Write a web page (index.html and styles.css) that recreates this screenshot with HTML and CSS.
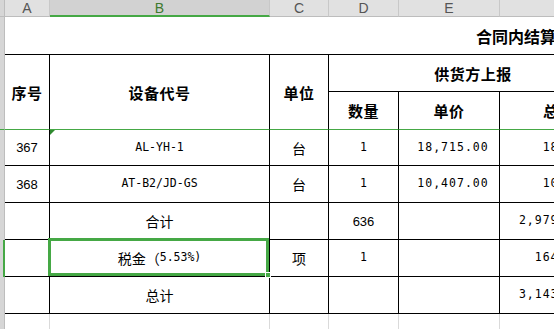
FILE: index.html
```html
<!DOCTYPE html>
<html lang="zh-CN">
<head>
    <meta charset="UTF-8">
    <meta name="viewport" content="width=device-width, initial-scale=1.0">
    <title>合同内结算</title>
    <link rel="stylesheet" href="styles.css">
</head>
<body>

<div class="sheet">
    <!-- column letters -->
    <div class="cell gutter colhead"></div>
    <div class="cell colhead">A</div>
    <div class="cell colhead active">B</div>
    <div class="cell colhead">C</div>
    <div class="cell colhead">D</div>
    <div class="cell colhead">E</div>
    <div class="cell colhead">F</div>

    <!-- title -->
    <div class="cell gutter"></div>
    <div class="cell title">合同内结算审核表</div>

    <!-- table head -->
    <div class="cell gutter"></div>
    <div class="cell th tall">序号</div>
    <div class="cell th tall">设备代号</div>
    <div class="cell th tall">单位</div>
    <div class="cell th group">供货方上报</div>
    <div class="cell gutter frozen"></div>
    <div class="cell th frozen">数量</div>
    <div class="cell th frozen">单价</div>
    <div class="cell th frozen">总价</div>

    <!-- rows -->
    <div class="cell gutter"></div>
    <div class="cell sans">367</div>
    <div class="cell mono note">AL-YH-1</div>
    <div class="cell">台</div>
    <div class="cell mono">1</div>
    <div class="cell mono money">18,715.00</div>
    <div class="cell mono money total">18,715.00</div>

    <div class="cell gutter"></div>
    <div class="cell sans">368</div>
    <div class="cell mono">AT-B2/JD-GS</div>
    <div class="cell">台</div>
    <div class="cell mono">1</div>
    <div class="cell mono money">10,407.00</div>
    <div class="cell mono money total">10,407.00</div>

    <div class="cell gutter"></div>
    <div class="cell"></div>
    <div class="cell">合计</div>
    <div class="cell"></div>
    <div class="cell sans">636</div>
    <div class="cell"></div>
    <div class="cell mono money total">2,979,613.00</div>

    <div class="cell gutter selrow"></div>
    <div class="cell"></div>
    <div class="cell selected">税金（<span class="mono">5.53%)</span></div>
    <div class="cell">项</div>
    <div class="cell mono">1</div>
    <div class="cell"></div>
    <div class="cell mono money total">164,772.60</div>

    <div class="cell gutter"></div>
    <div class="cell"></div>
    <div class="cell">总计</div>
    <div class="cell"></div>
    <div class="cell"></div>
    <div class="cell"></div>
    <div class="cell mono money total">3,143,385.60</div>

    <div class="cell gutter"></div>
    <div class="cell blank"></div>
    <div class="cell blank"></div>
    <div class="cell blank"></div>
    <div class="cell blank"></div>
    <div class="cell blank"></div>
    <div class="cell blank"></div>
</div>

</body>
</html>
```

FILE: styles.css
```css
html, body {
    margin: 0;
    padding: 0;
    overflow: hidden;
    background-color: #fff;
}
.sheet {
    display: grid;
    grid-template-columns: 5px 45px 220px 59px 70px 101px 118px;
    grid-template-rows: 17px 38px 37px 38px 36px 37px 37px 37px 37px 30px;
    width: max-content;
}
.cell {
    position: relative;
    box-sizing: border-box;
    display: flex;
    align-items: center;
    justify-content: center;
    border-right: 1px solid #000;
    border-bottom: 1px solid #000;
    font-family: "Noto Sans CJK SC", sans-serif;
    font-size: 14px;
    line-height: 1;
    color: #000;
    white-space: nowrap;
}
.gutter {
    background-color: #d6d6d6;
    border-right: 1px solid #bdbdbd;
    border-bottom: none;
}
.colhead {
    background-color: #e1e1e1;
    border-right: 1px solid #c8c8c8;
    border-bottom: 1px solid #bdbdbd;
    font-family: "Liberation Sans", sans-serif;
    font-size: 14px;
    color: #555;
}
.colhead.gutter {
    background-color: #d6d6d6;
    border-right: 1px solid #bdbdbd;
}
.colhead.active {
    background-color: #d2d2d2;
    border-bottom: 2px solid #45a845;
    color: #3f7a2e;
}
.title {
    grid-column: span 6;
    justify-content: flex-start;
    padding-left: 471px;
    border-right: none;
    font-size: 16px;
    font-weight: bold;
}
.th {
    font-size: 15px;
    font-weight: bold;
    letter-spacing: 0.5px;
}
.tall {
    grid-row: span 2;
    border-bottom-color: #45a845;
}
.group {
    grid-column: span 3;
}
.frozen {
    border-bottom: 1px solid #45a845;
}
.mono {
    font-family: "DejaVu Sans Mono", monospace;
    font-size: 11.5px;
}
.sans {
    font-family: "Liberation Sans", sans-serif;
    font-size: 13px;
}
.money {
    letter-spacing: 1px;
    padding-left: 8px;
}
.total {
    justify-content: flex-end;
    padding-left: 0;
    padding-right: 3px;
}
.note::before {
    content: "";
    position: absolute;
    top: 0;
    left: 0;
    border-top: 5px solid #2f8a2f;
    border-right: 5px solid transparent;
}
.selrow {
    border-right: 2px solid #45a845;
}
.selected::after {
    content: "";
    position: absolute;
    left: -2px;
    top: -2px;
    right: 0;
    bottom: 0;
    border: 3px solid #45a845;
}
.selected::before {
    content: "";
    position: absolute;
    right: -2px;
    bottom: -2px;
    width: 6px;
    height: 6px;
    background-color: #45a845;
    border: 1px solid #fff;
    box-sizing: border-box;
    z-index: 1;
}
.blank {
    border-right-color: #dadada;
    border-bottom: none;
}
```
